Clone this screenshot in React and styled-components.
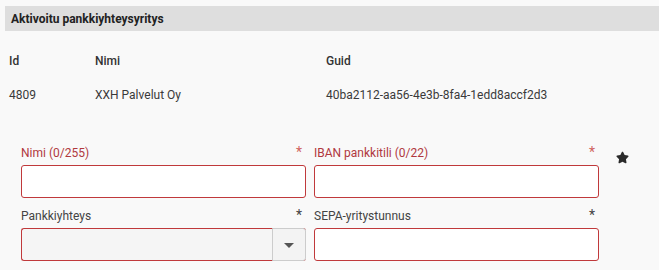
import React from "react";
import styled, { createGlobalStyle } from "styled-components";
import { FaStar } from "react-icons/fa";

const Global = createGlobalStyle`
  html, body { margin: 0; padding: 0; background: #f9f9f9; }
  body { font-family: Roboto, "Liberation Sans", sans-serif; color: #333; font-size: 12px; }
`;

const Page = styled.div`
  padding: 6px 0 0 5px;
`;

const SectionHeader = styled.div`
  height: 25px;
  background: #dedede;
  display: flex;
  align-items: center;
  padding-left: 6px;
  font-weight: 700;
  font-size: 12px;
  color: #222;
`;

const InfoGrid = styled.div`
  display: grid;
  grid-template-columns: 86px 231px 1fr;
  grid-auto-rows: 34px;
  padding-left: 4px;
  margin-top: 13px;
  align-items: center;
`;

const Cell = styled.div`
  font-weight: ${(p) => (p.$head ? 500 : 400)};
  color: ${(p) => (p.$head ? "#333" : "#3a3a3a")};
`;

const Form = styled.div`
  display: grid;
  grid-template-columns: 285px 285px 1fr;
  column-gap: 8px;
  row-gap: 6px;
  padding-left: 16px;
  margin-top: 29px;
`;

const Field = styled.div`
  display: flex;
  flex-direction: column;
`;

const LabelRow = styled.div`
  height: 24px;
  display: flex;
  align-items: center;
  justify-content: space-between;
  padding-right: 4px;
  color: ${(p) => (p.$error ? "#b0383e" : "#444")};
`;

const Asterisk = styled.span`
  font-size: 14px;
  line-height: 1;
  margin-top: -3px;
  color: ${(p) => (p.$error ? "#d0635f" : "#444")};
`;

const Input = styled.div`
  box-sizing: border-box;
  height: 33px;
  background: #fff;
  border: 1px solid #c0393b;
  border-radius: 3px;
`;

const Select = styled.div`
  box-sizing: border-box;
  height: 33px;
  display: flex;
  background: #f5f5f5;
  border: 1px solid #c0393b;
  border-right: none;
  border-radius: 3px;
`;

const SelectValue = styled.div`
  flex: 1;
`;

const SelectButton = styled.div`
  box-sizing: border-box;
  width: 34px;
  margin: -1px 0;
  background: #f3f3f3;
  border: 1px solid #cccccc;
  border-radius: 0 3px 3px 0;
  display: flex;
  align-items: center;
  justify-content: center;
`;

const Caret = styled.span`
  width: 0;
  height: 0;
  border-left: 5px solid transparent;
  border-right: 5px solid transparent;
  border-top: 5px solid #555;
  margin-top: 1px;
`;

const StarCell = styled.div`
  display: flex;
  padding: 10px 0 0 9px;
  color: #2b2b2b;
`;

function LabelledInput({ label, error, starError, children }) {
  return (
    <Field>
      <LabelRow $error={error}>
        <span>{label}</span>
        <Asterisk $error={starError}>*</Asterisk>
      </LabelRow>
      {children}
    </Field>
  );
}

export default function App() {
  return (
    <>
      <Global />
      <Page>
        <SectionHeader>Aktivoitu pankkiyhteysyritys</SectionHeader>
        <InfoGrid>
          <Cell $head>Id</Cell>
          <Cell $head>Nimi</Cell>
          <Cell $head>Guid</Cell>
          <Cell>4809</Cell>
          <Cell>XXH Palvelut Oy</Cell>
          <Cell>40ba2112-aa56-4e3b-8fa4-1edd8accf2d3</Cell>
        </InfoGrid>
        <Form>
          <LabelledInput label="Nimi (0/255)" error starError>
            <Input />
          </LabelledInput>
          <LabelledInput label="IBAN pankkitili (0/22)" error starError>
            <Input />
          </LabelledInput>
          <StarCell>
            <FaStar size={13} />
          </StarCell>
          <LabelledInput label="Pankkiyhteys">
            <Select>
              <SelectValue />
              <SelectButton>
                <Caret />
              </SelectButton>
            </Select>
          </LabelledInput>
          <LabelledInput label="SEPA-yritystunnus">
            <Input />
          </LabelledInput>
          <div />
        </Form>
      </Page>
    </>
  );
}
